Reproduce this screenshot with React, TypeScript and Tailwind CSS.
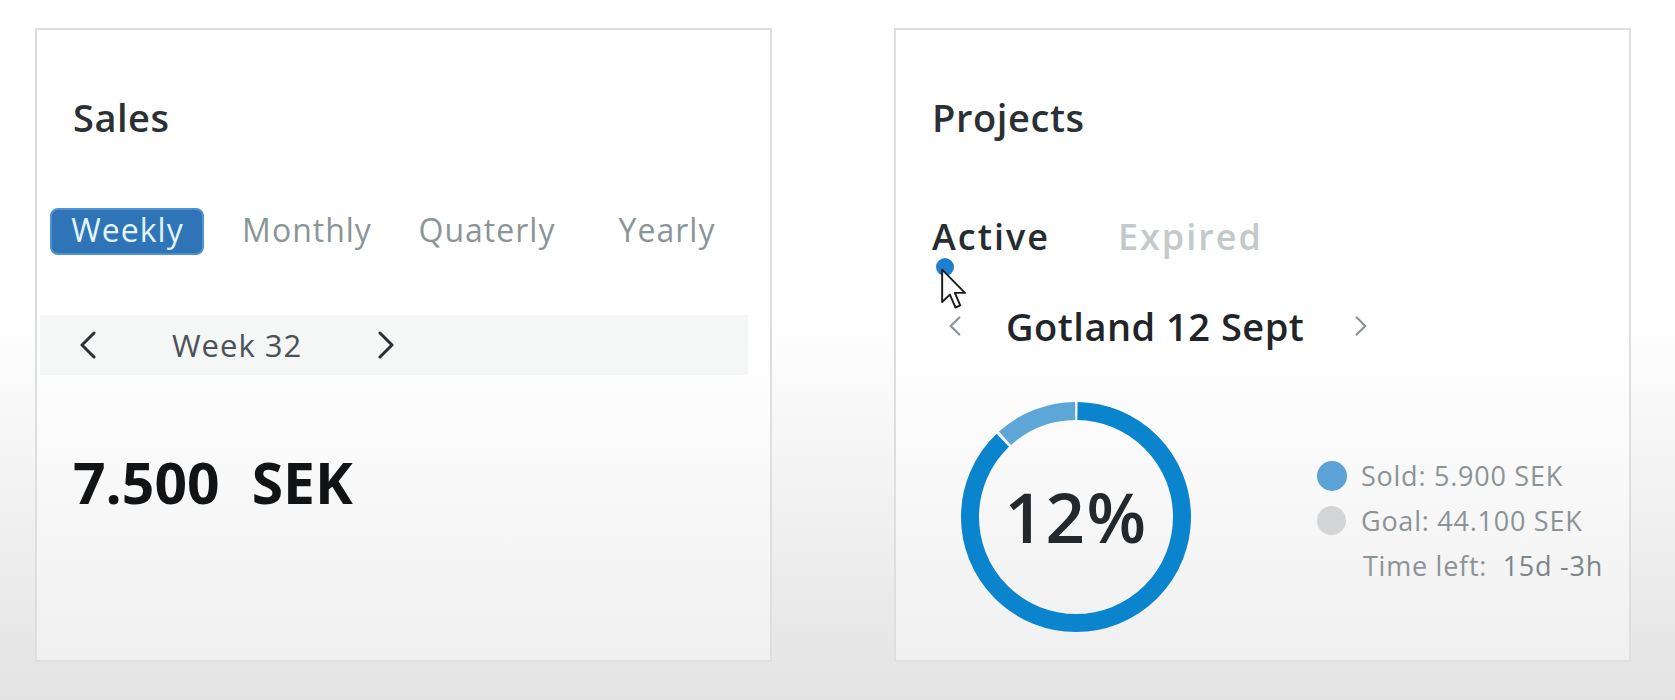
import React from 'react'

const font = { fontFamily: '"Open Sans", "Noto Sans", sans-serif' }

// left/right chevrons used in the week bar and project switcher
function Chevron({ dir, className }: { dir: 'left' | 'right'; className?: string }) {
    const d = dir === 'left' ? 'M15 2 L3 14 L15 26' : 'M3 2 L15 14 L3 26'
    return (
        <svg viewBox="0 0 18 28" className={className} fill="none" stroke="currentColor" strokeWidth={3} strokeLinecap="round" strokeLinejoin="round">
            <path d={d} />
        </svg>
    )
}

function Donut({ percent }: { percent: number }) {
    const size = 230
    const stroke = 18
    const r = (size - stroke) / 2
    const c = 2 * Math.PI * r
    const gap = 3
    const soldLen = (percent / 100) * c
    const restLen = c - soldLen
    return (
        <div className="relative w-[230px] h-[230px] shrink-0">
            <svg width={size} height={size} className="-rotate-90">
                <circle
                    cx={size / 2} cy={size / 2} r={r} fill="none" stroke="#0a84cd" strokeWidth={stroke}
                    strokeDasharray={`${restLen - gap} ${c}`} strokeDashoffset={-gap / 2}
                />
                <circle
                    cx={size / 2} cy={size / 2} r={r} fill="none" stroke="#5da6d8" strokeWidth={stroke}
                    strokeDasharray={`${soldLen - gap} ${c}`} strokeDashoffset={-(restLen + gap / 2)}
                />
            </svg>
            <div className="absolute inset-0 flex items-center justify-center">
                <span className="text-[69px] leading-none font-semibold text-[#22282c] tracking-[1.5px] mt-[-2px]">{percent}%</span>
            </div>
        </div>
    )
}

export default function App() {
    const tabs = ['Weekly', 'Monthly', 'Quaterly', 'Yearly']

    return (
        <div style={font} className="w-full h-[700px] bg-linear-to-b from-white from-45% to-[#e3e3e3] flex pl-[35px] pt-[28px] gap-[122px]">

            {/* SALES CARD */}
            <div className="w-[737px] h-[634px] border-2 border-[#dcdfe0] bg-linear-to-b from-white from-50% to-[#f0f0f0] flex flex-col">
                <h2 className="mt-[68px] pl-[36px] text-[38px] leading-none font-semibold tracking-[0.5px] text-[#2a3034]">Sales</h2>

                <div className="mt-[72px] grid grid-cols-4 w-[720px]">
                    {tabs.map((t, i) => (
                        <div key={t} className="flex justify-center">
                            {i === 0 ? (
                                <span className="h-[47px] pl-[19px] pr-[18px] pt-[4px] rounded-[8px] bg-[#2e74b7] border-2 border-[#4f92d4] text-[#e2f4ff] text-[32px] leading-none tracking-[1px]">{t}</span>
                            ) : (
                                <span className="h-[47px] pt-[6px] text-[#8b9597] text-[32px] leading-none tracking-[1px]">{t}</span>
                            )}
                        </div>
                    ))}
                </div>

                <div className="mt-[60px] ml-[3px] w-[708px] h-[60px] bg-[#f5f6f6] flex items-center">
                    <Chevron dir="left" className="ml-[39px] w-[18px] h-[28px] text-[#2b3034]" />
                    <span className="ml-[75px] text-[31px] leading-none tracking-[1px] text-[#4a5257]">Week 32</span>
                    <Chevron dir="right" className="ml-[75px] w-[18px] h-[28px] text-[#2b3034]" />
                </div>

                <div className="mt-[79px] pl-[36px] flex gap-[32px] text-[57px] leading-none font-bold text-[#111315]">
                    <span>7.500</span>
                    <span>SEK</span>
                </div>
            </div>

            {/* PROJECTS CARD */}
            <div className="w-[737px] h-[634px] border-2 border-[#dcdfe0] bg-linear-to-b from-white from-50% to-[#f0f0f0] flex flex-col pl-[36px]">
                <h2 className="mt-[68px] text-[38px] leading-none font-semibold tracking-[0.6px] text-[#2a3034]">Projects</h2>

                <div className="mt-[83px] flex gap-[68px] text-[36px] leading-none font-semibold tracking-[2px]">
                    <span className="text-[#262c30]">Active</span>
                    <span className="text-[#c3c9cb]">Expired</span>
                </div>

                <div className="relative mt-[3px] ml-[4px] w-[18px] h-[18px] rounded-full bg-[#1e7fd0]">
                    {/* mouse pointer hovering the active tab */}
                    <svg className="absolute left-[4px] top-[9px]" width="28" height="44" viewBox="0 0 13 20">
                        <path d="M1 1 L1 16 L4.6 12.6 L7.2 18.6 L9.4 17.6 L6.9 11.8 L11.6 11.8 Z" fill="white" stroke="#1c1c1c" strokeWidth={0.9} strokeLinejoin="round" />
                    </svg>
                </div>

                <div className="mt-[31px] flex items-center">
                    <Chevron dir="left" className="ml-[16px] w-[14px] h-[20px] text-[#8a9396]" />
                    <span className="ml-[44px] text-[38px] leading-none font-semibold tracking-[0.5px] text-[#1f2528]">Gotland 12 Sept</span>
                    <Chevron dir="right" className="ml-[50px] w-[14px] h-[20px] text-[#8a9396]" />
                </div>

                <div className="mt-[57px] ml-[29px] flex items-start">
                    <Donut percent={12} />
                    <div className="ml-[126px] mt-[51px] text-[27px] leading-[45px] tracking-[0.75px] text-[#8b9396]">
                        <div className="flex items-center">
                            <span className="w-[30px] h-[30px] rounded-full bg-[#5ba3d6] mr-[14px]" />
                            <span>Sold: 5.900 SEK</span>
                        </div>
                        <div className="flex items-center">
                            <span className="w-[29px] h-[29px] rounded-full bg-[#d3d5d6] mr-[15px]" />
                            <span>Goal: 44.100 SEK</span>
                        </div>
                        <div className="pl-[46px]">
                            Time left:&nbsp; <span className="text-[#7c8588]">15d -3h</span>
                        </div>
                    </div>
                </div>
            </div>
        </div>
    )
}
